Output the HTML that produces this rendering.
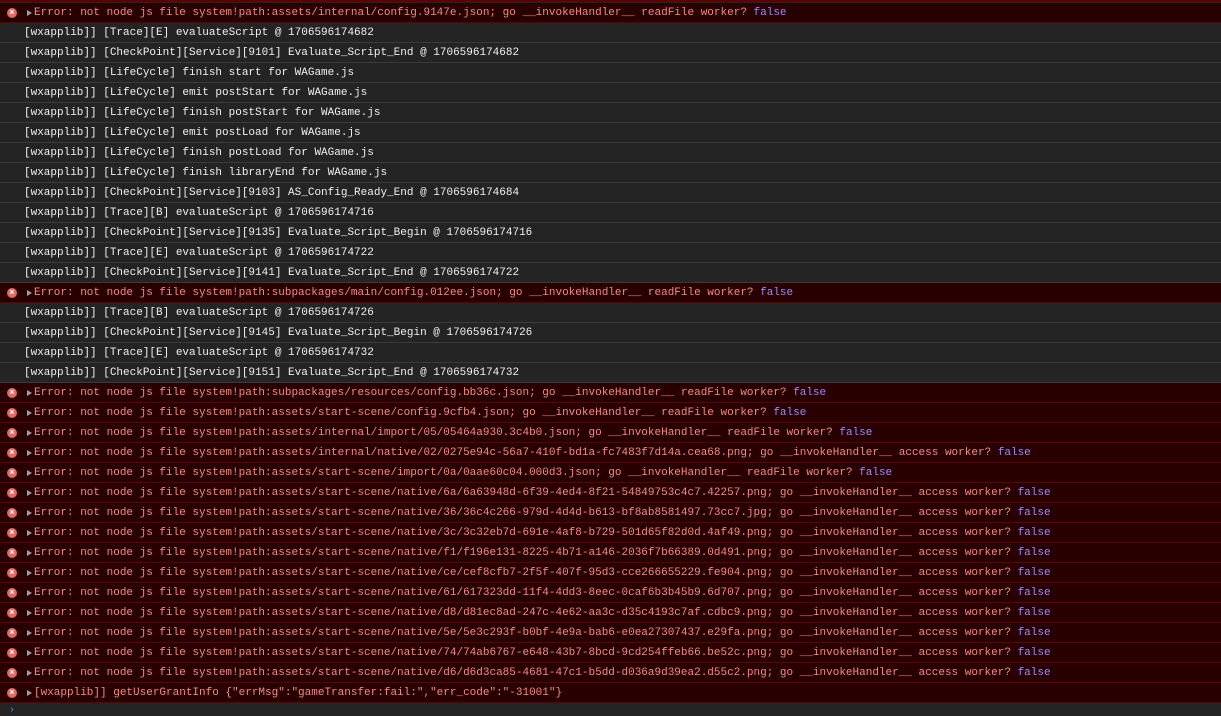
<!DOCTYPE html><html><head><style>
body{margin:0;background:#242424;width:1221px;height:711px;overflow:hidden;font-family:"Liberation Mono",monospace;font-size:11px}
.wrap{padding-top:3px}
.r{height:19px;line-height:21px;border-bottom:1px solid #3a3a3a;color:#f0f0f0;padding-left:24px;white-space:pre;position:relative}
.e{background:#290000;color:#f38b84;border-bottom:1px solid #5c0000;padding-left:34px}
.e:before{content:"";position:absolute;left:7px;top:5px;width:10px;height:10px;border-radius:50%;background:#e46962}
.e:after{content:"";position:absolute;left:27px;top:7px;border-left:5px solid #a0a0a0;border-top:3.5px solid transparent;border-bottom:3.5px solid transparent}
.x{position:absolute;left:7px;top:-1px;width:10px;text-align:center;color:#fff;font-weight:bold;font-family:"Liberation Sans",sans-serif;font-size:9px;z-index:1}
.f{color:#9a8bff}
.top{position:absolute;top:0;left:0;right:0;height:2px;background:#5c0000}
</style></head><body><div class="top"></div><div class="wrap">
<div class="r e"><span class="x">×</span>Error: not node js file system!path:assets/internal/config.9147e.json; go __invokeHandler__ readFile worker? <span class="f">false</span></div>
<div class="r">[wxapplib]] [Trace][E] evaluateScript @ 1706596174682</div>
<div class="r">[wxapplib]] [CheckPoint][Service][9101] Evaluate_Script_End @ 1706596174682</div>
<div class="r">[wxapplib]] [LifeCycle] finish start for WAGame.js</div>
<div class="r">[wxapplib]] [LifeCycle] emit postStart for WAGame.js</div>
<div class="r">[wxapplib]] [LifeCycle] finish postStart for WAGame.js</div>
<div class="r">[wxapplib]] [LifeCycle] emit postLoad for WAGame.js</div>
<div class="r">[wxapplib]] [LifeCycle] finish postLoad for WAGame.js</div>
<div class="r">[wxapplib]] [LifeCycle] finish libraryEnd for WAGame.js</div>
<div class="r">[wxapplib]] [CheckPoint][Service][9103] AS_Config_Ready_End @ 1706596174684</div>
<div class="r">[wxapplib]] [Trace][B] evaluateScript @ 1706596174716</div>
<div class="r">[wxapplib]] [CheckPoint][Service][9135] Evaluate_Script_Begin @ 1706596174716</div>
<div class="r">[wxapplib]] [Trace][E] evaluateScript @ 1706596174722</div>
<div class="r">[wxapplib]] [CheckPoint][Service][9141] Evaluate_Script_End @ 1706596174722</div>
<div class="r e"><span class="x">×</span>Error: not node js file system!path:subpackages/main/config.012ee.json; go __invokeHandler__ readFile worker? <span class="f">false</span></div>
<div class="r">[wxapplib]] [Trace][B] evaluateScript @ 1706596174726</div>
<div class="r">[wxapplib]] [CheckPoint][Service][9145] Evaluate_Script_Begin @ 1706596174726</div>
<div class="r">[wxapplib]] [Trace][E] evaluateScript @ 1706596174732</div>
<div class="r">[wxapplib]] [CheckPoint][Service][9151] Evaluate_Script_End @ 1706596174732</div>
<div class="r e"><span class="x">×</span>Error: not node js file system!path:subpackages/resources/config.bb36c.json; go __invokeHandler__ readFile worker? <span class="f">false</span></div>
<div class="r e"><span class="x">×</span>Error: not node js file system!path:assets/start-scene/config.9cfb4.json; go __invokeHandler__ readFile worker? <span class="f">false</span></div>
<div class="r e"><span class="x">×</span>Error: not node js file system!path:assets/internal/import/05/05464a930.3c4b0.json; go __invokeHandler__ readFile worker? <span class="f">false</span></div>
<div class="r e"><span class="x">×</span>Error: not node js file system!path:assets/internal/native/02/0275e94c-56a7-410f-bd1a-fc7483f7d14a.cea68.png; go __invokeHandler__ access worker? <span class="f">false</span></div>
<div class="r e"><span class="x">×</span>Error: not node js file system!path:assets/start-scene/import/0a/0aae60c04.000d3.json; go __invokeHandler__ readFile worker? <span class="f">false</span></div>
<div class="r e"><span class="x">×</span>Error: not node js file system!path:assets/start-scene/native/6a/6a63948d-6f39-4ed4-8f21-54849753c4c7.42257.png; go __invokeHandler__ access worker? <span class="f">false</span></div>
<div class="r e"><span class="x">×</span>Error: not node js file system!path:assets/start-scene/native/36/36c4c266-979d-4d4d-b613-bf8ab8581497.73cc7.jpg; go __invokeHandler__ access worker? <span class="f">false</span></div>
<div class="r e"><span class="x">×</span>Error: not node js file system!path:assets/start-scene/native/3c/3c32eb7d-691e-4af8-b729-501d65f82d0d.4af49.png; go __invokeHandler__ access worker? <span class="f">false</span></div>
<div class="r e"><span class="x">×</span>Error: not node js file system!path:assets/start-scene/native/f1/f196e131-8225-4b71-a146-2036f7b66389.0d491.png; go __invokeHandler__ access worker? <span class="f">false</span></div>
<div class="r e"><span class="x">×</span>Error: not node js file system!path:assets/start-scene/native/ce/cef8cfb7-2f5f-407f-95d3-cce266655229.fe904.png; go __invokeHandler__ access worker? <span class="f">false</span></div>
<div class="r e"><span class="x">×</span>Error: not node js file system!path:assets/start-scene/native/61/617323dd-11f4-4dd3-8eec-0caf6b3b45b9.6d707.png; go __invokeHandler__ access worker? <span class="f">false</span></div>
<div class="r e"><span class="x">×</span>Error: not node js file system!path:assets/start-scene/native/d8/d81ec8ad-247c-4e62-aa3c-d35c4193c7af.cdbc9.png; go __invokeHandler__ access worker? <span class="f">false</span></div>
<div class="r e"><span class="x">×</span>Error: not node js file system!path:assets/start-scene/native/5e/5e3c293f-b0bf-4e9a-bab6-e0ea27307437.e29fa.png; go __invokeHandler__ access worker? <span class="f">false</span></div>
<div class="r e"><span class="x">×</span>Error: not node js file system!path:assets/start-scene/native/74/74ab6767-e648-43b7-8bcd-9cd254ffeb66.be52c.png; go __invokeHandler__ access worker? <span class="f">false</span></div>
<div class="r e"><span class="x">×</span>Error: not node js file system!path:assets/start-scene/native/d6/d6d3ca85-4681-47c1-b5dd-d036a9d39ea2.d55c2.png; go __invokeHandler__ access worker? <span class="f">false</span></div>
<div class="r e"><span class="x">×</span>[wxapplib]] getUserGrantInfo {"errMsg":"gameTransfer:fail:","err_code":"-31001"}</div>
<div style="position:relative;height:8px"><span style="position:absolute;left:9px;top:2px;color:#4a90e2;font-size:10px">›</span></div>
</div></body></html>
